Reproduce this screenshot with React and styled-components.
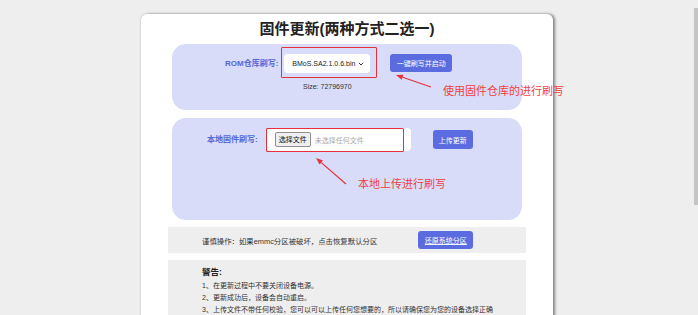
import React from "react";
import styled, { createGlobalStyle } from "styled-components";

const GlobalStyle = createGlobalStyle`
  html, body {
    margin: 0;
    padding: 0;
    background: #eeeeee;
    overflow: hidden;
    font-family: "Liberation Sans", "Noto Sans CJK SC", sans-serif;
    color: #333;
  }
`;

const Page = styled.div`
  height: 315px;
  padding-top: 14px;
  box-sizing: border-box;
`;

const Card = styled.div`
  position: relative;
  width: 412px;
  margin-left: 141px;
  min-height: 320px;
  background: #fff;
  border-radius: 6px;
  box-shadow: 2px 0 3px rgba(0, 0, 0, 0.45), -1px 0 2px rgba(0, 0, 0, 0.08);
  padding-top: 5px;
  box-sizing: border-box;
`;

const Title = styled.h1`
  margin: 0 0 6px;
  font-size: 15px;
  line-height: 19px;
  font-weight: 700;
  text-align: center;
  color: #222;
`;

const Panel = styled.div`
  margin: 0 31px ${(p) => p.gap || 0}px;
  height: ${(p) => p.h}px;
  background: #d8dcf8;
  border-radius: 14px;
  box-sizing: border-box;
  padding: 10px 0 0 ${(p) => p.pl}px;
`;

const Row = styled.div`
  display: flex;
  align-items: ${(p) => p.align || "center"};
`;

const Label = styled.span`
  font-size: 8px;
  font-weight: 700;
  color: #5468d6;
  line-height: 19px;
  white-space: nowrap;
`;

const SelectCol = styled.div`
  display: flex;
  flex-direction: column;
  align-items: center;
  margin-left: 6px;
`;

const Select = styled.div`
  width: 86px;
  height: 19px;
  background: #fff;
  border-radius: 4px;
  display: flex;
  align-items: center;
  justify-content: space-between;
  padding: 0 6px 0 8px;
  box-sizing: border-box;
  font-size: 7px;
  color: #222;
`;

const SizeText = styled.div`
  margin-top: 9px;
  font-size: 7px;
  line-height: 10px;
  color: #333;
`;

const Button = styled.button`
  width: ${(p) => p.w}px;
  height: ${(p) => p.h || 18}px;
  margin-left: ${(p) => p.ml}px;
  padding: 0;
  border: none;
  border-radius: 3px;
  background: #5b6ce0;
  color: #fff;
  font-family: inherit;
  font-size: 7px;
  text-decoration: ${(p) => (p.link ? "underline" : "none")};
  flex-shrink: 0;
`;

const FileBox = styled.div`
  width: 144px;
  height: 23px;
  margin-left: 9px;
  background: #fff;
  border-radius: 4px;
  display: flex;
  align-items: center;
  padding-left: 8px;
  box-sizing: border-box;
  gap: 4px;
`;

const ChooseBtn = styled.span`
  height: 13px;
  padding: 0 3px;
  border: 1px solid #8f8f8f;
  border-radius: 2px;
  background: #efefef;
  font-size: 7px;
  line-height: 13px;
  color: #111;
`;

const NoFile = styled.span`
  font-size: 7px;
  color: #aaa;
`;

const GrayBar = styled.div`
  margin: 0 27px ${(p) => p.gap || 0}px;
  background: #eeeeee;
  box-sizing: border-box;
  padding: ${(p) => p.pad};
  ${(p) => (p.h ? `height: ${p.h}px;` : "")}
  ${(p) => (p.flex ? "display: flex; align-items: center;" : "")}
`;

const Note = styled.span`
  font-size: 7.4px;
  color: #333;
  white-space: nowrap;
`;

const WarnTitle = styled.div`
  font-size: 8.5px;
  font-weight: 700;
  line-height: 12px;
  margin-bottom: 2px;
  color: #222;
`;

const WarnLine = styled.div`
  font-size: 7px;
  line-height: 12px;
  color: #333;
`;

const RedBox = styled.div`
  position: absolute;
  left: ${(p) => p.x}px;
  top: ${(p) => p.y}px;
  width: ${(p) => p.w}px;
  height: ${(p) => p.h}px;
  border: 1.5px solid #e5323a;
  border-radius: 1px;
  box-sizing: border-box;
`;

const RedNote = styled.div`
  position: absolute;
  left: ${(p) => p.x}px;
  top: ${(p) => p.y}px;
  font-size: 11px;
  line-height: 14px;
  color: #ef3f3f;
  white-space: nowrap;
  font-family: "Noto Sans CJK SC", sans-serif;
`;

const ArrowSvg = styled.svg`
  position: absolute;
  left: 0;
  top: 0;
  overflow: visible;
  pointer-events: none;
`;

const ScrollThumb = styled.div`
  position: fixed;
  right: 0;
  top: 8px;
  width: 4px;
  height: 197px;
  background: #c4c4c4;
`;

const Arrow = ({ x1, y1, x2, y2 }) => {
  // arrow points from (x1,y1) tail to (x2,y2) tip
  const a = Math.atan2(y2 - y1, x2 - x1);
  const L = 7;
  const W = 2.6;
  const bx = x2 - L * Math.cos(a);
  const by = y2 - L * Math.sin(a);
  const px = -Math.sin(a) * W;
  const py = Math.cos(a) * W;
  return (
    <g>
      <line x1={x1} y1={y1} x2={bx} y2={by} stroke="#e5323a" strokeWidth="1.2" />
      <polygon
        points={`${x2},${y2} ${bx + px},${by + py} ${bx - px},${by - py}`}
        fill="#e5323a"
      />
    </g>
  );
};

const Chevron = () => (
  <svg width="6" height="4" viewBox="0 0 6 4">
    <path d="M0.8 0.8 L3 3 L5.2 0.8" fill="none" stroke="#333" strokeWidth="1" />
  </svg>
);

export default function App() {
  return (
    <Page>
      <GlobalStyle />
      <Card>
        <Title>固件更新(两种方式二选一)</Title>

        <Panel h={66} pl={53} gap={8}>
          <Row align="flex-start">
            <Label>ROM仓库刷写:</Label>
            <SelectCol>
              <Select>
                <span>BMoS.SA2.1.0.6.bin</span>
                <Chevron />
              </Select>
              <SizeText>Size: 72796970</SizeText>
            </SelectCol>
            <Button w={62} ml={20}>一键刷写并启动</Button>
          </Row>
        </Panel>

        <Panel h={102} pl={35} gap={7}>
          <Row>
            <Label>本地固件刷写:</Label>
            <FileBox>
              <ChooseBtn>选择文件</ChooseBtn>
              <NoFile>未选择任何文件</NoFile>
            </FileBox>
            <Button w={40} h={19} ml={22}>上传更新</Button>
          </Row>
        </Panel>

        <GrayBar h={26} pad="0 0 0 34px" gap={7} flex>
          <Note>谨慎操作：如果emmc分区被破坏，点击恢复默认分区</Note>
          <Button w={55} ml={41} link>还原系统分区</Button>
        </GrayBar>

        <GrayBar pad="6px 28px 10px 34px">
          <WarnTitle>警告:</WarnTitle>
          <WarnLine>1、在更新过程中不要关闭设备电源。</WarnLine>
          <WarnLine>2、更新成功后，设备会自动重启。</WarnLine>
          <WarnLine>3、上传文件不带任何校验，您可以可以上传任何您想要的，所以请确保您为您的设备选择正确的固件。</WarnLine>
        </GrayBar>

        <RedBox x={140} y={33} w={96} h={31} />
        <RedBox x={125} y={114} w={138} h={24} />
        <RedNote x={302} y={69}>使用固件仓库的进行刷写</RedNote>
        <RedNote x={217} y={162}>本地上传进行刷写</RedNote>
        <ArrowSvg width="412" height="300">
          <Arrow x1={290} y1={73} x2={255} y2={61} />
          <Arrow x1={205} y1={170} x2={175} y2={144} />
        </ArrowSvg>
      </Card>
      <ScrollThumb />
    </Page>
  );
}
